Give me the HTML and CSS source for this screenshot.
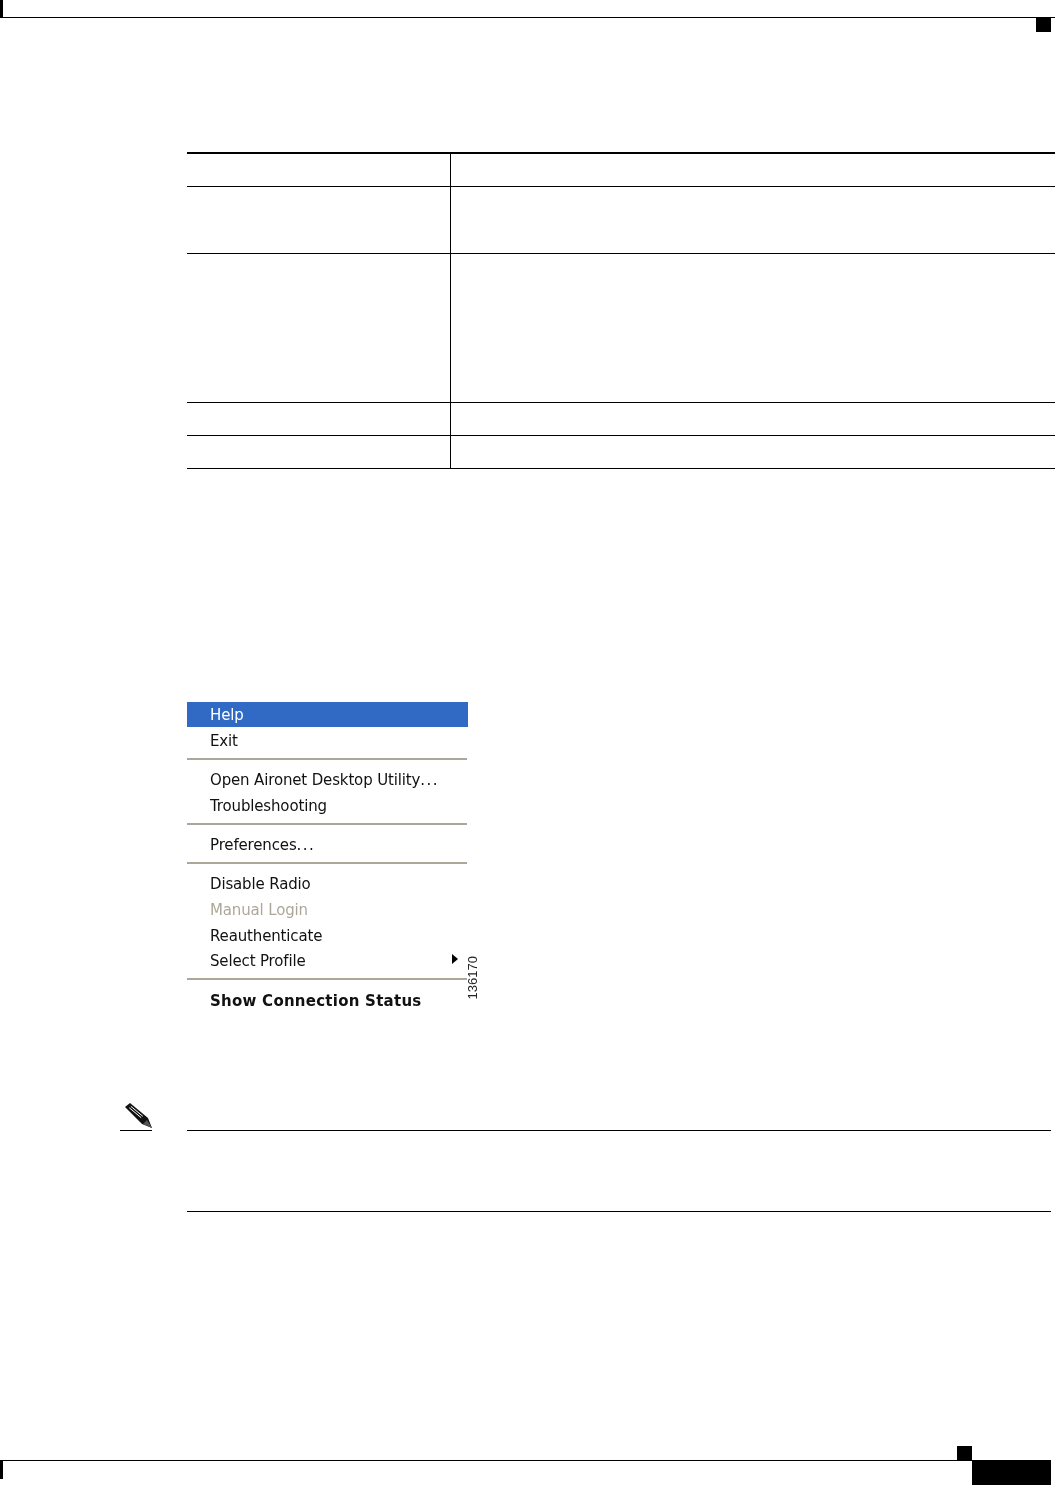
FILE: index.html
```html
<!DOCTYPE html>
<html lang="en">
<head>
    <meta charset="UTF-8">
    <meta name="viewport" content="width=device-width, initial-scale=1.0">
    <title>Aironet Desktop Utility</title>
    <link rel="stylesheet" href="styles.css">
</head>
<body>

<div class="page">
    <header class="top-bar">
        <div class="crop-mark"></div>
        <div class="top-square"></div>
    </header>

    <table class="spec-table">
        <tr class="row-head"><td></td><td></td></tr>
        <tr class="row-two"><td></td><td></td></tr>
        <tr class="row-five"><td></td><td></td></tr>
        <tr class="row-one"><td></td><td></td></tr>
        <tr class="row-one"><td></td><td></td></tr>
    </table>

    <div class="figure">
        <ul class="menu">
            <li class="active">Help</li>
            <li>Exit</li>
            <li class="sep"></li>
            <li>Open Aironet Desktop Utility<span class="dots">...</span></li>
            <li>Troubleshooting</li>
            <li class="sep"></li>
            <li>Preferences<span class="dots">...</span></li>
            <li class="sep"></li>
            <li>Disable Radio</li>
            <li class="disabled">Manual Login</li>
            <li>Reauthenticate</li>
            <li class="has-sub">Select Profile</li>
            <li class="sep"></li>
            <li class="bold">Show Connection Status</li>
        </ul>
        <div class="figure-id">136170</div>
    </div>

    <div class="note">
        <div class="note-icon">
            <svg width="32" height="26" viewBox="0 0 32 26">
                <polygon points="10,0 28,15 32,25 22,21 5,4" fill="#111"/>
                <path d="M10.800 3.300 L22.800 13.300 M9.200 4.700 L21.200 14.700" stroke="#fff" stroke-width="1" fill="none"/>
                <polygon points="27,17 32,25 23,21" fill="#555"/>
            </svg>
        </div>
        <div class="note-body"></div>
    </div>

    <footer class="bottom-bar">
        <div class="bottom-line">
            <div class="bottom-square"></div>
            <div class="crop-mark-low"></div>
        </div>
        <div class="page-tab"></div>
    </footer>
</div>

</body>
</html>
```

FILE: styles.css
```css
body {
    margin: 0;
    background-color: #fff;
    font-family: "DejaVu Sans", "Noto Sans", sans-serif;
}

.page {
    display: flex;
    flex-direction: column;
    height: 1485px;
    overflow: hidden;
}

.top-bar {
    position: relative;
    height: 17px;
    border-bottom: 1px solid #000;
}

.crop-mark {
    width: 3px;
    height: 17px;
    background-color: #000;
}

.top-square {
    position: absolute;
    top: 18px;
    right: 4px;
    width: 15px;
    height: 14px;
    background-color: #000;
}

.spec-table {
    width: 868px;
    margin: 134px 0 0 187px;
    border-collapse: separate;
    border-spacing: 0;
    border-top: 2px solid #000;
    table-layout: fixed;
}

.spec-table td {
    padding: 0;
    border-bottom: 1px solid #000;
}

.spec-table td:first-child {
    width: 263px;
    border-right: 1px solid #000;
}

.row-head td {
    height: 32px;
}

.row-two td {
    height: 66px;
}

.row-five td {
    height: 148px;
}

.row-one td {
    height: 32px;
}

.figure {
    position: relative;
    width: 281px;
    height: 309px;
    margin: 233px 0 0 187px;
}

.menu {
    list-style: none;
    margin: 0;
    padding: 0;
    font-size: 15px;
    letter-spacing: -0.150px;
    color: #111;
    filter: blur(0.350px);
}

.menu li {
    position: relative;
    height: 25.600px;
    line-height: 27px;
    padding-left: 23px;
    white-space: nowrap;
}

.menu .active {
    height: 25px;
    margin-bottom: 0.600px;
    background-color: #316ac5;
    color: #fff;
}

.menu .sep {
    height: 2px;
    margin: 4.500px 1px 7.300px 0;
    padding: 0;
    background-color: #aca899;
}

.menu .disabled {
    color: #aca899;
}

.menu .bold {
    letter-spacing: 0.250px;
    font-weight: 700;
}

.dots {
    letter-spacing: 1.500px;
}

.has-sub::after {
    content: "";
    position: absolute;
    top: 6px;
    right: 10px;
    border-left: 6px solid #000;
    border-top: 5px solid transparent;
    border-bottom: 5px solid transparent;
}

.figure-id {
    position: absolute;
    left: 278px;
    top: 254px;
    writing-mode: vertical-rl;
    transform: rotate(180deg);
    font-family: "Liberation Sans", Arial, sans-serif;
    font-size: 13px;
    line-height: 15px;
    color: #222;
}

.note {
    display: flex;
    margin: 92px 0 0 120px;
    width: 931px;
}

.note-icon {
    flex: none;
    box-sizing: border-box;
    width: 32px;
    height: 28px;
    margin-right: 35px;
    border-bottom: 1px solid #000;
}

.note-body {
    flex: 1;
    height: 80px;
    margin-top: 27px;
    border-top: 1px solid #000;
    border-bottom: 1px solid #000;
}

.bottom-bar {
    display: flex;
    margin-top: 248px;
}

.bottom-line {
    position: relative;
    box-sizing: border-box;
    width: 972px;
    height: 25px;
    border-top: 1px solid #000;
}

.bottom-square {
    position: absolute;
    top: -15px;
    right: 0;
    width: 15px;
    height: 14px;
    background-color: #000;
}

.crop-mark-low {
    width: 3px;
    height: 18px;
    background-color: #000;
}

.page-tab {
    width: 79px;
    height: 25px;
    background-color: #000;
}
```
